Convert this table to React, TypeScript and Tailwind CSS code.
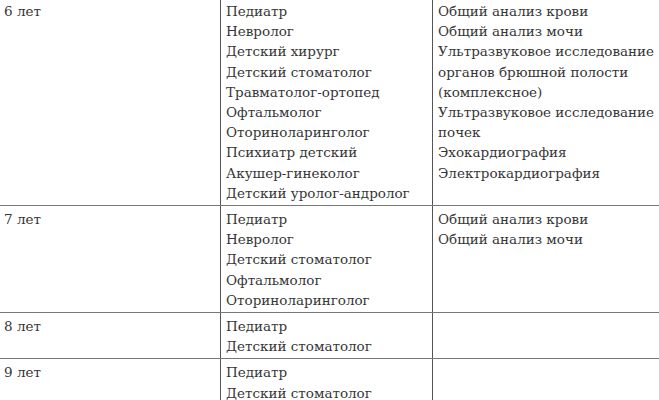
const rows = [
  {
    age: "6 лет",
    doctors: [
      "Педиатр",
      "Невролог",
      "Детский хирург",
      "Детский стоматолог",
      "Травматолог-ортопед",
      "Офтальмолог",
      "Оториноларинголог",
      "Психиатр детский",
      "Акушер-гинеколог",
      "Детский уролог-андролог",
    ],
    tests: [
      ["Общий анализ крови"],
      ["Общий анализ мочи"],
      ["Ультразвуковое исследование", "органов брюшной полости", "(комплексное)"],
      ["Ультразвуковое исследование", "почек"],
      ["Эхокардиография"],
      ["Электрокардиография"],
    ],
  },
  {
    age: "7 лет",
    doctors: ["Педиатр", "Невролог", "Детский стоматолог", "Офтальмолог", "Оториноларинголог"],
    tests: [["Общий анализ крови"], ["Общий анализ мочи"]],
  },
  { age: "8 лет", doctors: ["Педиатр", "Детский стоматолог"], tests: [] },
  { age: "9 лет", doctors: ["Педиатр", "Детский стоматолог"], tests: [] },
];

export default function App() {
  return (
    <div className="h-[400px] w-[659px] overflow-hidden bg-white text-[#363636] font-['DejaVu_Serif',serif] text-[13.5px] leading-[20.2px]">
      <div className="-mt-[2px]">
        {rows.map((r) => (
          <div key={r.age} className="flex border-b border-[#777]">
            <div className="w-[220px] shrink-0 pl-[4px] pt-[3px] pb-[2px]">{r.age}</div>
            <div className="w-[212px] shrink-0 border-l border-[#555] pl-[5px] pt-[3px] pb-[2px]">
              {r.doctors.map((d) => (
                <div key={d}>{d}</div>
              ))}
            </div>
            <div className="flex-1 border-l border-[#555] pl-[5px] pt-[3px] pb-[2px] whitespace-nowrap">
              {r.tests.map((t, i) => (
                <div key={i}>
                  {t.map((line) => (
                    <div key={line}>{line}</div>
                  ))}
                </div>
              ))}
            </div>
          </div>
        ))}
      </div>
    </div>
  );
}
